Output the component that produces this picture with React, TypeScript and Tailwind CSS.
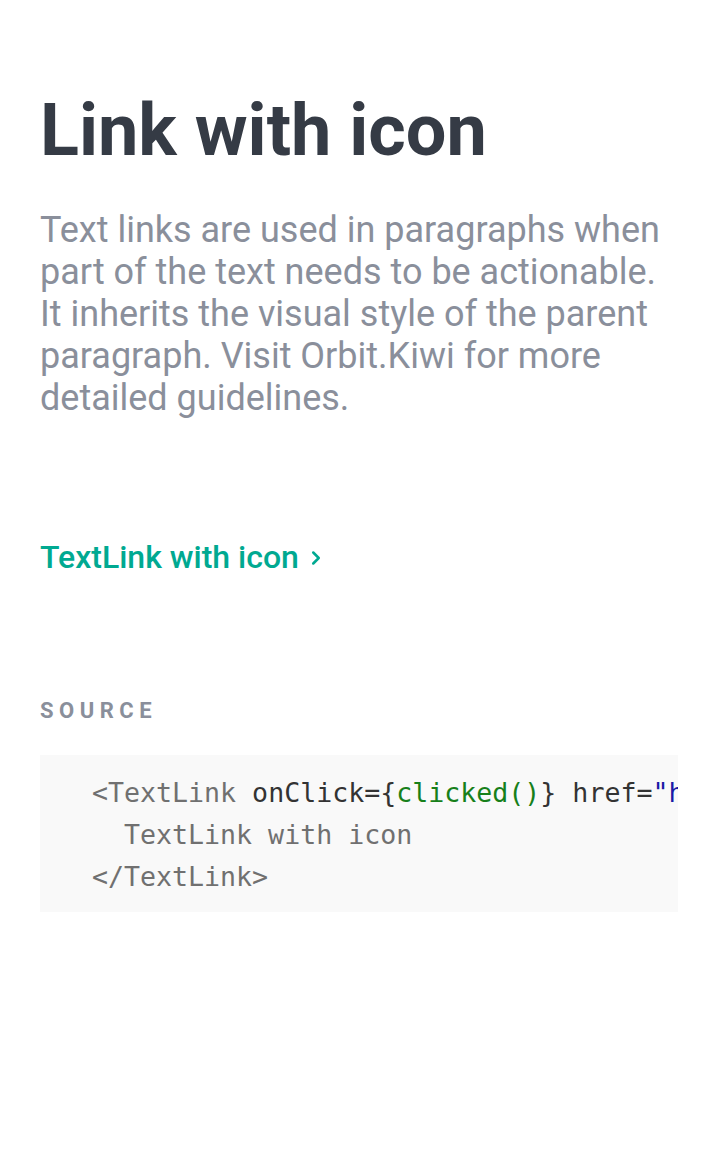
import { ChevronRight } from 'lucide-react';

export default function App() {
  return (
    <div className="min-h-screen bg-white px-10 pt-[88px] font-['Roboto',sans-serif]">
      <h1 className="text-[72px] font-bold leading-[86px] text-[#353b45]">Link with icon</h1>
      <p className="mt-[35px] text-[36px] leading-[42px] text-[#8a8f9b]">
        Text links are used in paragraphs when part of the text needs to be actionable. It inherits the visual style of the parent paragraph. Visit Orbit.Kiwi for more detailed guidelines.
      </p>

      <div className="mt-[118px]">
        <a className="inline-flex items-center gap-[6px] text-[32px] font-medium leading-[40px] text-[#00a991]">
          TextLink with icon
          <ChevronRight className="w-[22px] h-[22px] mt-[2px]" strokeWidth={2.75} />
        </a>
      </div>

      <h3 className="mt-[119px] text-[22px] font-bold uppercase tracking-[5.5px] leading-[30px] text-[#8a8f9b]">Source</h3>

      <pre className="mt-[29px] overflow-hidden bg-[#f9f9f9] pl-[52px] pt-[17px] pb-[14px] font-['DejaVu_Sans_Mono',monospace] text-[26.6px] leading-[42px] text-[#333]">
        <div>
          <span className="text-[#707070]">&lt;TextLink</span> onClick={'{'}<span className="text-[#17801a]">clicked()</span>{'}'} href=<span className="text-[#1a1aa6]">"https://kiwi.com"</span>
          <span className="text-[#707070]">&gt;</span>
        </div>
        <div className="text-[#707070]">  TextLink with icon</div>
        <div className="text-[#707070]">&lt;/TextLink&gt;</div>
      </pre>
    </div>
  );
}
